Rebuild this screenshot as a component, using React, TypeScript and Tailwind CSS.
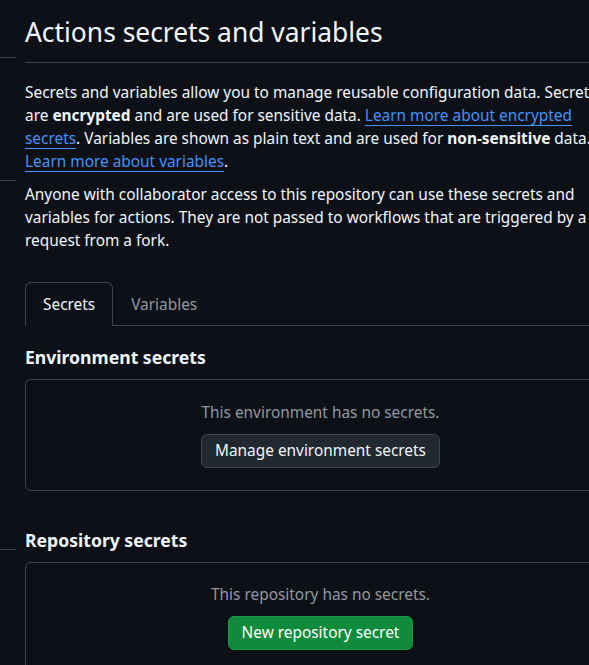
import React, { useState } from 'react';

const App: React.FC = () => {
  const [tab, setTab] = useState<'secrets' | 'variables'>('secrets');

  return (
    <div className="h-screen w-full overflow-hidden bg-[#0d1117] font-['Noto_Sans',sans-serif] text-[#f0f6fc]">
      <div className="flex">
        {/* bits of the settings sidebar */}
        <div className="w-4 shrink-0">
          <div className="mt-[57px] h-px bg-[#3d444d]" />
          <div className="mt-[122px] h-px bg-[#3d444d]" />
          <div className="mt-[368px] h-px bg-[#3d444d]" />
        </div>

        <main className="ml-[9px] w-[591px] shrink-0">
          <div className="border-b border-[#3d444d] pt-[16px] pb-[13px]">
            <h2 className="text-[26.4px] font-normal leading-[33px]">Actions secrets and variables</h2>
          </div>

          <p className="mt-[18px] text-[15.4px] leading-[23px]">
            Secrets and variables allow you to manage reusable configuration data. Secrets are{' '}
            <strong className="font-bold">encrypted</strong> and are used for sensitive data.{' '}
            <a href="#" className="text-[#4493f8] underline underline-offset-[3.5px]">
              Learn more about encrypted secrets
            </a>
            . Variables are shown as plain text and are used for{' '}
            <strong className="font-bold">non-sensitive</strong> data.{' '}
            <a href="#" className="text-[#4493f8] underline underline-offset-[3.5px]">
              Learn more about variables
            </a>
            .
          </p>

          <p className="mt-[10px] text-[15.4px] leading-[23px]">
            Anyone with collaborator access to this repository can use these secrets and variables for actions. They
            are not passed to workflows that are triggered by a request from a fork.
          </p>

          <nav className="mt-[30px] flex border-b border-[#3d444d] text-[15.4px] leading-[23px]">
            <button
              type="button"
              onClick={() => setTab('secrets')}
              className={
                tab === 'secrets'
                  ? '-mb-px rounded-t-[6px] border border-[#3d444d] border-b-transparent bg-[#0d1117] px-[17px] pt-[10px] pb-[9px] text-[#f0f6fc]'
                  : '-mb-px border border-transparent px-[17px] pt-[10px] pb-[9px] text-[#9198a1]'
              }
            >
              Secrets
            </button>
            <button
              type="button"
              onClick={() => setTab('variables')}
              className={
                tab === 'variables'
                  ? '-mb-px rounded-t-[6px] border border-[#3d444d] border-b-transparent bg-[#0d1117] px-[17px] pt-[10px] pb-[9px] text-[#f0f6fc]'
                  : '-mb-px border border-transparent px-[17px] pt-[10px] pb-[9px] text-[#9198a1]'
              }
            >
              Variables
            </button>
          </nav>

          <h3 className="mt-[18px] text-[17.6px] font-bold leading-[26px]">Environment secrets</h3>
          <div className="mt-[9px] flex flex-col items-center rounded-[6px] border border-[#3d444d] pt-[21px] pb-[22px]">
            <p className="text-[15.4px] leading-[23px] text-[#9198a1]">This environment has no secrets.</p>
            <button
              type="button"
              className="mt-[10px] h-[34px] rounded-[6px] border border-[#3d444d] bg-[#212830] px-[13px] text-[15.4px] text-[#f0f6fc]"
            >
              Manage environment secrets
            </button>
          </div>

          <h3 className="mt-[36px] text-[17.6px] font-bold leading-[26px]">Repository secrets</h3>
          <div className="mt-[9px] flex flex-col items-center rounded-[6px] border border-[#3d444d] pt-[20px] pb-[22px]">
            <p className="text-[15.4px] leading-[23px] text-[#9198a1]">This repository has no secrets.</p>
            <button
              type="button"
              className="mt-[10px] h-[34px] rounded-[6px] border border-[#22944a] bg-[#0f8c3b] px-[13px] text-[15.4px] text-white"
            >
              New repository secret
            </button>
          </div>
        </main>
      </div>
    </div>
  );
};

export default App;
